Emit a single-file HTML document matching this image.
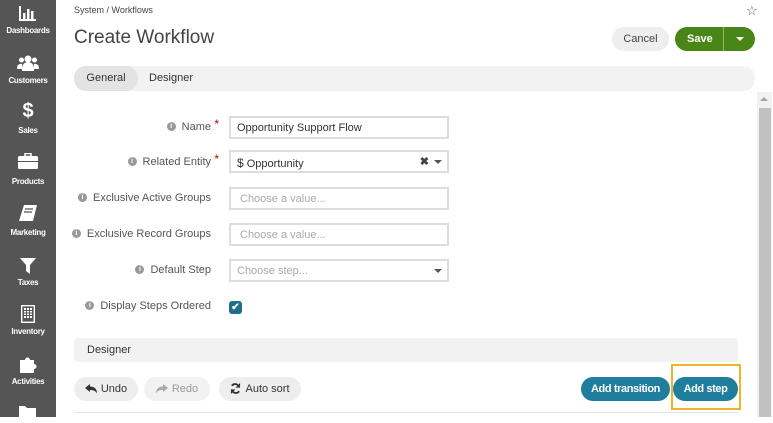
<!DOCTYPE html>
<html><head><style>
*{box-sizing:border-box;margin:0;padding:0}
body{width:773px;height:417px;overflow:hidden;background:#fff;font-family:"Liberation Sans",sans-serif;color:#333;position:relative}
.sb{position:absolute;left:0;top:0;width:56px;height:417px;background:#555}
.it{position:absolute;left:0;width:56px;text-align:center;color:#fff;font-size:8px;font-weight:bold;letter-spacing:-0.3px}
.ic{position:absolute;left:0;width:56px;text-align:center;color:#fff}
.a{position:absolute}
.lbl{position:absolute;right:562px;font-size:11px;color:#555;white-space:nowrap;line-height:13px;display:flex;align-items:center}
.lbl i{display:block;width:9px;height:9px;border-radius:50%;background:#999;margin-right:6px;margin-top:-2px;font-style:normal;color:#fff;font-size:7px;line-height:9px;text-align:center;font-weight:bold}
.star{color:#c00;font-size:12px;position:absolute;right:-8px;top:-3px}
.inp{position:absolute;left:229px;width:220px;height:23px;border:2px solid #ddd;font-size:11px;padding:4px 6px;color:#333}
.ph{color:#aaa;padding-left:9px}
.btn{position:absolute;top:377px;height:24px;border-radius:12px;background:#eee;font-size:11px;line-height:24px;text-align:center;color:#333}
.btn svg{vertical-align:-2px;margin-right:4px}
.blue{background:#1f7e9e;color:#fff;font-weight:bold;letter-spacing:-0.4px}
</style></head><body>
<div class="sb">
 <div class="ic" style="top:5px"><svg width="18" height="16" viewBox="0 0 18 16"><path d="M1 1v14h16" stroke="#fff" stroke-width="2" fill="none"/><rect x="4" y="8" width="2.5" height="6" fill="#fff"/><rect x="8" y="4" width="2.5" height="10" fill="#fff"/><rect x="12" y="6" width="2.5" height="8" fill="#fff"/></svg></div>
 <div class="it" style="top:26px">Dashboards</div>
 <div class="ic" style="top:54px"><svg width="22" height="18" viewBox="0 0 22 18"><circle cx="11" cy="5" r="3.5" fill="#fff"/><circle cx="4.5" cy="6" r="2.5" fill="#fff"/><circle cx="17.5" cy="6" r="2.5" fill="#fff"/><path d="M5 17v-3a6 6 0 0 1 12 0v3zM0 15v-2a4 4 0 0 1 5-3v5zM22 15v-2a4 4 0 0 0-5-3v5z" fill="#fff"/></svg></div>
 <div class="it" style="top:76px">Customers</div>
 <div class="ic" style="top:100px;font-size:20px;font-weight:bold">$</div>
 <div class="it" style="top:126px">Sales</div>
 <div class="ic" style="top:153px"><svg width="20" height="16" viewBox="0 0 20 16"><rect x="7" y="0.5" width="6" height="3" stroke="#fff" fill="none" stroke-width="1.5"/><rect x="0" y="3" width="20" height="13" rx="1.5" fill="#fff"/><rect x="0" y="8" width="20" height="1" fill="#555"/></svg></div>
 <div class="it" style="top:177px">Products</div>
 <div class="ic" style="top:205px"><svg width="18" height="16" viewBox="0 0 18 16"><path d="M5 0h13l-4 16H0z" fill="#fff"/><path d="M6 4h8M5 7h8" stroke="#555" stroke-width="1.2"/></svg></div>
 <div class="it" style="top:228px">Marketing</div>
 <div class="ic" style="top:258px"><svg width="16" height="16" viewBox="0 0 16 16"><path d="M0 0h16l-6 7v9l-4-3V7z" fill="#fff"/></svg></div>
 <div class="it" style="top:278px">Taxes</div>
 <div class="ic" style="top:305px"><svg width="14" height="18" viewBox="0 0 14 18"><rect x="0.7" y="0.7" width="12.6" height="16.6" stroke="#fff" stroke-width="1.4" fill="none"/><path d="M3 3h8v10H3z" fill="#fff"/><path d="M3 5.5h8M3 8h8M3 10.5h8M5.5 3v10M8.5 3v10" stroke="#555"/></svg></div>
 <div class="it" style="top:327px">Inventory</div>
 <div class="ic" style="top:355px"><svg width="18" height="18" viewBox="0 0 18 18"><path d="M1 5h5a2.5 2.5 0 1 1 5 0h4v4a2.5 2.5 0 1 1 0 5v4H1z" fill="#fff"/></svg></div>
 <div class="it" style="top:377px">Activities</div>
 <div class="ic" style="top:404px"><svg width="20" height="14" viewBox="0 0 20 14"><path d="M1 2h6l2 2h9v10H1z" fill="#fff"/></svg></div>
</div>

<div class="a" style="left:74px;top:5px;font-size:9px;color:#444">System / Workflows</div>
<div class="a" style="left:746px;top:3px;font-size:13px;color:#555">☆</div>
<div class="a" style="left:74px;top:27px;font-size:19px;color:#444">Create Workflow</div>
<div class="a" style="left:612px;top:27px;width:57px;height:24px;border-radius:12px;background:#eee;font-size:11px;line-height:24px;text-align:center;color:#444">Cancel</div>
<div class="a" style="left:675px;top:27px;width:80px;height:24px;border-radius:12px;background:#4a8517;color:#fff;font-size:11px;font-weight:bold;line-height:24px">
 <span style="position:absolute;left:12px">Save</span>
 <span style="position:absolute;left:48px;top:0;width:1px;height:24px;background:#8fb86a"></span>
 <span style="position:absolute;left:61px;top:10px;border-left:4px solid transparent;border-right:4px solid transparent;border-top:4px solid #fff"></span>
</div>

<div class="a" style="left:74px;top:66px;width:681px;height:25px;border-radius:12px;background:#f2f2f2"></div>
<div class="a" style="left:74px;top:66px;width:64px;height:25px;border-radius:12px;background:#e3e3e3;font-size:11px;line-height:25px;text-align:center">General</div>
<div class="a" style="left:149px;top:66px;font-size:11px;line-height:25px">Designer</div>

<div class="a" style="left:757px;top:92px;width:15px;height:325px;background:#f1f1f1"></div>
<div class="a" style="left:759px;top:108px;width:12px;height:309px;background:#c1c1c1"></div>
<div class="a" style="left:760px;top:97px;border-left:4px solid transparent;border-right:4px solid transparent;border-bottom:4px solid #a3a3a3"></div>

<div class="lbl" style="top:121px"><i>i</i>Name<span class="star">*</span></div>
<div class="inp" style="top:116px">Opportunity Support Flow</div>
<div class="lbl" style="top:156px"><i>i</i>Related Entity<span class="star">*</span></div>
<div class="inp" style="top:150px"><span style="font-size:12px">$</span> Opportunity<span style="position:absolute;right:18px;top:3px;font-size:11px;font-weight:bold;color:#444">✖</span><span style="position:absolute;right:5px;top:8px;border-left:4px solid transparent;border-right:4px solid transparent;border-top:4px solid #555"></span></div>
<div class="lbl" style="top:192px"><i>i</i>Exclusive Active Groups</div>
<div class="inp ph" style="top:187px;color:#aaa">Choose a value...</div>
<div class="lbl" style="top:228px"><i>i</i>Exclusive Record Groups</div>
<div class="inp ph" style="top:223px;color:#aaa">Choose a value...</div>
<div class="lbl" style="top:264px"><i>i</i>Default Step</div>
<div class="inp" style="top:259px;color:#aaa">Choose step...<span style="position:absolute;right:5px;top:8px;border-left:4px solid transparent;border-right:4px solid transparent;border-top:4px solid #555"></span></div>
<div class="lbl" style="top:300px"><i>i</i>Display Steps Ordered</div>
<div class="a" style="left:229px;top:301px;width:13px;height:13px;border-radius:3px;background:#1f6e8c;color:#fff;font-size:10px;line-height:13px;text-align:center;font-weight:bold">✔</div>

<div class="a" style="left:74px;top:338px;width:664px;height:24px;border-radius:4px;background:#f2f2f2;font-size:11px;line-height:24px;padding-left:13px">Designer</div>

<div class="btn" style="left:74px;width:64px"><svg width="12" height="10" viewBox="0 0 12 10"><path d="M0 4L5 0v2.5c4 0 7 2 7 7-1.5-3-4-3.5-7-3.5V8z" fill="#333"/></svg>Undo</div>
<div class="btn" style="left:144px;width:66px;background:#f2f2f2;color:#999"><svg width="12" height="10" viewBox="0 0 12 10"><path d="M12 4L7 0v2.5c-4 0-7 2-7 7 1.5-3 4-3.5 7-3.5V8z" fill="#aaa"/></svg>Redo</div>
<div class="btn" style="left:219px;width:82px"><svg width="11" height="11" viewBox="0 0 12 12"><path d="M10 4.5A4.5 4.5 0 0 0 2 3M2 7.5A4.5 4.5 0 0 0 10 9" stroke="#333" stroke-width="2" fill="none"/><path d="M11 0v5H6zM1 12V7h5z" fill="#333"/></svg>Auto sort</div>
<div class="btn blue" style="left:581px;width:89px">Add transition</div>
<div class="btn blue" style="left:673px;width:65px">Add step</div>
<div class="a" style="left:671px;top:364px;width:70px;height:46px;border:2px solid #f0b429"></div>
<div class="a" style="left:74px;top:412px;width:664px;height:1px;background:#e5e5e5"></div>
</body></html>
